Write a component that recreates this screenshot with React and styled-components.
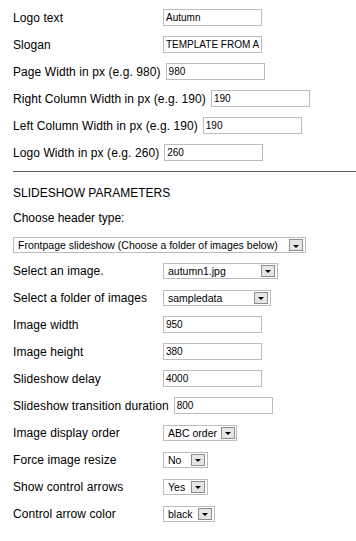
import React from "react";
import styled, { createGlobalStyle } from "styled-components";

const GlobalStyle = createGlobalStyle`
  body {
    margin: 0;
    background: #ffffff;
    color: #000000;
    font-family: "Liberation Sans", Arial, sans-serif;
    font-size: 12px;
  }
`;

const basicFields = [
  { label: "Logo text", value: "Autumn" },
  { label: "Slogan", value: "TEMPLATE FROM A" },
  { label: "Page Width in px (e.g. 980)", value: "980" },
  { label: "Right Column Width in px (e.g. 190)", value: "190" },
  { label: "Left Column Width in px (e.g. 190)", value: "190" },
  { label: "Logo Width in px (e.g. 260)", value: "260" },
];

const slideFields = [
  { label: "Select an image.", select: "autumn1.jpg", width: 115 },
  { label: "Select a folder of images", select: "sampledata", width: 108 },
  { label: "Image width", value: "950" },
  { label: "Image height", value: "380" },
  { label: "Slideshow delay", value: "4000" },
  { label: "Slideshow transition duration", value: "800" },
  { label: "Image display order", select: "ABC order", width: 74 },
  { label: "Force image resize", select: "No", width: 45 },
  { label: "Show control arrows", select: "Yes", width: 45 },
  { label: "Control arrow color", select: "black", width: 52 },
];

const Field = ({ field }) => (
  <Row>
    <Label>{field.label}</Label>
    {field.select ? (
      <Dropdown value={field.select} width={field.width} />
    ) : (
      <TextInput type="text" value={field.value} readOnly />
    )}
  </Row>
);

const Dropdown = ({ value, width }) => (
  <SelectBox $w={width}>
    <SelectText>{value}</SelectText>
    <DropButton>
      <Arrow />
    </DropButton>
  </SelectBox>
);

const App = () => {
  return (
    <Page>
      <GlobalStyle />
      {basicFields.map((f) => (
        <Field key={f.label} field={f} />
      ))}
      <Divider />
      <Heading>SLIDESHOW PARAMETERS</Heading>
      <Caption>Choose header type:</Caption>
      <WideSelect>
        <Dropdown
          value="Frontpage slideshow (Choose a folder of images below)"
          width={293}
        />
      </WideSelect>
      {slideFields.map((f) => (
        <Field key={f.label} field={f} />
      ))}
    </Page>
  );
};

export default App;

const Page = styled.div`
  padding: 4px 0 0 13px;
`;

const Row = styled.div`
  display: flex;
  align-items: center;
  height: 27px;
`;

const Label = styled.span`
  min-width: 145px;
  margin-right: 5px;
  line-height: 14px;
  letter-spacing: 0.08px;
  white-space: nowrap;
`;

const TextInput = styled.input`
  box-sizing: border-box;
  width: 99px;
  height: 17px;
  margin: 0;
  padding: 0 2px;
  border: 1px solid #bcbcbc;
  background: #ffffff;
  color: #000000;
  font-family: "Liberation Sans", Arial, sans-serif;
  font-size: 10px;
  outline: none;
`;

const Divider = styled.div`
  margin-top: 5px;
  border-top: 1px solid #5e5e5e;
`;

const Heading = styled.div`
  margin-top: 14px;
  line-height: 14px;
`;

const Caption = styled.div`
  margin-top: 11px;
  line-height: 14px;
`;

const WideSelect = styled.div`
  margin: 12px 0 4px;
`;

const SelectBox = styled.div`
  box-sizing: border-box;
  display: flex;
  align-items: center;
  justify-content: space-between;
  width: ${(p) => p.$w}px;
  height: 16px;
  padding: 0 2px 0 4px;
  border: 1px solid #bcbcbc;
  background: #ffffff;
  font-size: 10.5px;
  white-space: nowrap;
  overflow: hidden;
`;

const SelectText = styled.span`
  line-height: 12px;
`;

const DropButton = styled.span`
  box-sizing: border-box;
  display: flex;
  align-items: center;
  justify-content: center;
  flex: none;
  width: 14px;
  height: 12px;
  margin-left: 4px;
  border: 1px solid #8c8c8c;
  background: #e6e6e6;
`;

const Arrow = styled.span`
  width: 0;
  height: 0;
  border-left: 3px solid transparent;
  border-right: 3px solid transparent;
  border-top: 3px solid #000000;
  margin-top: 2px;
`;
